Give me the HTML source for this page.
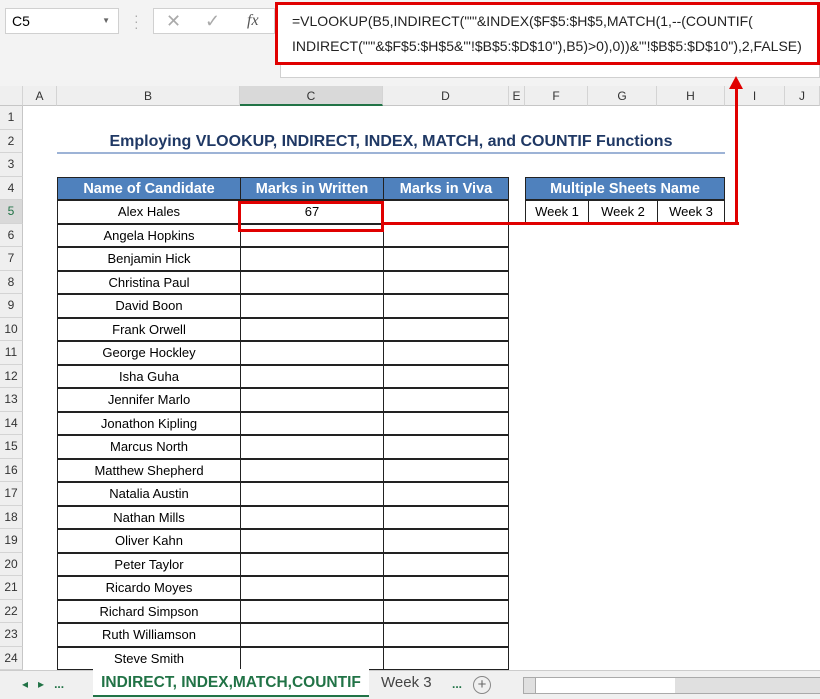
<!DOCTYPE html><html><head><meta charset="utf-8"><style>
*{margin:0;padding:0;box-sizing:border-box}
body{width:820px;height:699px;overflow:hidden;background:#fff;font-family:"Liberation Sans",sans-serif;position:relative}
.a{position:absolute}
.ch{position:absolute;top:86px;height:20px;background:#efefef;border-right:1px solid #d4d4d4;border-bottom:1px solid #c6c6c6;font-size:12px;color:#333;text-align:center;line-height:20px}
.rh{position:absolute;left:0;width:23px;height:23.5px;background:#efefef;border-bottom:1px solid #d4d4d4;border-right:1px solid #c6c6c6;font-size:12px;color:#333;text-align:center;line-height:23px}
.c{position:absolute;height:23.5px;border:1px solid #222;font-size:13px;text-align:center;line-height:22px;color:#000}
.h{background:#4f81bd;color:#fff;font-weight:bold;font-size:14.5px}
</style></head><body>
<div class="a" style="left:0;top:0;width:820px;height:86px;background:#f3f3f3"></div>
<div class="a" style="left:5px;top:8px;width:114px;height:26px;background:#fff;border:1px solid #d0d0d0;font-size:14px;line-height:24px;padding-left:6px">C5<span style="position:absolute;right:8px;font-size:8px;color:#666">▼</span></div>
<div class="a" style="left:134px;top:12px;color:#aaa;font-size:14px;line-height:6px">·<br>·<br>·</div>
<div class="a" style="left:153px;top:8px;width:122px;height:26px;background:#fff;border:1px solid #d0d0d0;color:#aaa;font-size:18px;line-height:24px"><span style="position:absolute;left:12px">✕</span><span style="position:absolute;left:51px">✓</span><span style="position:absolute;left:93px;color:#555;font-family:'Liberation Serif';font-style:italic;font-size:16px">fx</span></div>
<div class="a" style="left:280px;top:8px;width:540px;height:70px;background:#fff;border:1px solid #d0d0d0"></div>
<div class="a" style="left:275px;top:2px;width:545px;height:63px;border:3px solid #e00000;background:#fff;font-size:14px;line-height:25px;padding:4px 0 0 14px;white-space:nowrap;overflow:hidden;color:#222">=VLOOKUP(B5,INDIRECT("'"&amp;INDEX($F$5:$H$5,MATCH(1,--(COUNTIF(<br>INDIRECT("'"&amp;$F$5:$H$5&amp;"'!$B$5:$D$10"),B5)&gt;0),0))&amp;"'!$B$5:$D$10"),2,FALSE)</div>
<div class="ch" style="left:0;width:23px"></div>
<div class="ch" style="left:23px;width:34px">A</div>
<div class="ch" style="left:57px;width:183px">B</div>
<div class="ch" style="left:240px;width:143px;background:#d9d9d9;border-bottom:2px solid #217346">C</div>
<div class="ch" style="left:383px;width:126px">D</div>
<div class="ch" style="left:509px;width:16px">E</div>
<div class="ch" style="left:525px;width:63px">F</div>
<div class="ch" style="left:588px;width:69px">G</div>
<div class="ch" style="left:657px;width:68px">H</div>
<div class="ch" style="left:725px;width:60px">I</div>
<div class="ch" style="left:785px;width:35px">J</div>
<div id="rows"></div>
<div class="a" style="left:57px;top:130px;width:668px;text-align:center;font-size:16px;font-weight:bold;color:#1f3864;line-height:23px;white-space:nowrap">Employing VLOOKUP, INDIRECT, INDEX, MATCH, and COUNTIF Functions</div>
<div class="a" style="left:57px;top:152px;width:668px;height:2px;background:#9db3d6"></div>
<div id="tbl"></div>
<div class="c h" style="left:525px;top:176.5px;width:200px">Multiple Sheets Name</div>
<div class="c" style="left:525px;top:200px;width:64px">Week 1</div>
<div class="c" style="left:588px;top:200px;width:70px">Week 2</div>
<div class="c" style="left:657px;top:200px;width:68px">Week 3</div>
<div class="a" style="left:238px;top:201px;width:146px;height:31px;border:3px solid #e00000"></div>
<div class="a" style="left:383px;top:222px;width:356px;height:3px;background:#e00000"></div>
<div class="a" style="left:735px;top:86px;width:3px;height:139px;background:#e00000"></div>
<div class="a" style="left:729px;top:76px;width:0;height:0;border-left:7px solid transparent;border-right:7px solid transparent;border-bottom:13px solid #e00000"></div>
<div class="a" style="left:0;top:670px;width:820px;height:29px;background:#f0f0f0;border-top:1px solid #ccc"></div>
<div class="a" style="left:22px;top:677px;font-size:12px;color:#217346">◂ &nbsp;&nbsp;▸ &nbsp;&nbsp;<b>...</b></div>
<div class="a" style="left:93px;top:669px;width:276px;height:28px;background:#fff;border-bottom:2px solid #217346;color:#217346;font-weight:bold;font-size:15.5px;text-align:center;line-height:28px">INDIRECT, INDEX,MATCH,COUNTIF</div>
<div class="a" style="left:381px;top:674px;font-size:15px;color:#444">Week 3</div>
<div class="a" style="left:452px;top:677px;font-size:12px;color:#217346;font-weight:bold">...</div>
<div class="a" style="left:473px;top:676px;width:18px;height:18px;border:1px solid #888;border-radius:50%;text-align:center;line-height:16px;color:#666;font-size:15px">+</div>
<div class="a" style="left:523px;top:677px;width:340px;height:17px;border:1px solid #aaa;background:#e0e0e0"></div>
<div class="a" style="left:535px;top:678px;width:140px;height:15px;background:#fff;border-left:1px solid #aaa"></div>
<script>
var r='',t='';
for(var i=1;i<=24;i++){r+='<div class="rh" style="top:'+(106+(i-1)*23.5)+'px'+(i==5?';background:#d9d9d9;color:#217346':'')+'">'+i+'</div>';}
document.getElementById('rows').innerHTML=r;
var n=["Alex Hales","Angela Hopkins","Benjamin Hick","Christina Paul","David Boon","Frank Orwell","George Hockley","Isha Guha","Jennifer Marlo","Jonathon Kipling","Marcus North","Matthew Shepherd","Natalia Austin","Nathan Mills","Oliver Kahn","Peter Taylor","Ricardo Moyes","Richard Simpson","Ruth Williamson","Steve Smith"];
t+='<div class="c h" style="left:57px;top:176.5px;width:184px">Name of Candidate</div><div class="c h" style="left:240px;top:176.5px;width:144px">Marks in Written</div><div class="c h" style="left:383px;top:176.5px;width:126px">Marks in Viva</div>';
for(var j=0;j<20;j++){var y=200+j*23.5;t+='<div class="c" style="left:57px;top:'+y+'px;width:184px">'+n[j]+'</div><div class="c" style="left:240px;top:'+y+'px;width:144px">'+(j==0?'67':'')+'</div><div class="c" style="left:383px;top:'+y+'px;width:126px"></div>';}
document.getElementById('tbl').innerHTML=t;
</script>
</body></html>
